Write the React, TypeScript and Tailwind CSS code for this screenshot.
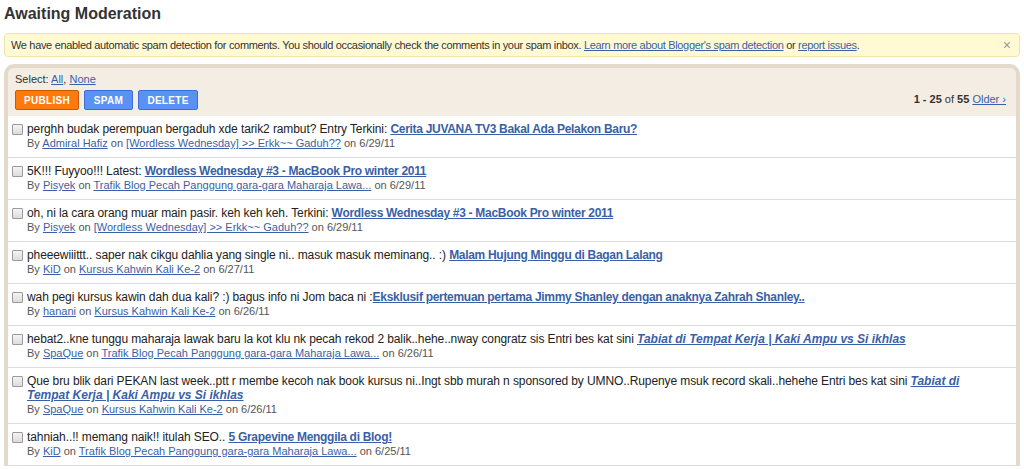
const rows = [
  {
    text: "perghh budak perempuan bergaduh xde tarik2 rambut? Entry Terkini: ",
    link: "Cerita JUVANA TV3 Bakal Ada Pelakon Baru?",
    author: "Admiral Hafiz",
    post: "[Wordless Wednesday] >> Erkk~~ Gaduh??",
    date: "6/29/11",
  },
  {
    text: "5K!!! Fuyyoo!!! Latest: ",
    link: "Wordless Wednesday #3 - MacBook Pro winter 2011",
    author: "Pisyek",
    post: "Trafik Blog Pecah Panggung gara-gara Maharaja Lawa...",
    date: "6/29/11",
  },
  {
    text: "oh, ni la cara orang muar main pasir. keh keh keh. Terkini: ",
    link: "Wordless Wednesday #3 - MacBook Pro winter 2011",
    author: "Pisyek",
    post: "[Wordless Wednesday] >> Erkk~~ Gaduh??",
    date: "6/29/11",
  },
  {
    text: "pheeewiiittt.. saper nak cikgu dahlia yang single ni.. masuk masuk meminang.. :) ",
    link: "Malam Hujung Minggu di Bagan Lalang",
    author: "KiD",
    post: "Kursus Kahwin Kali Ke-2",
    date: "6/27/11",
  },
  {
    text: "wah pegi kursus kawin dah dua kali? :) bagus info ni Jom baca ni :",
    link: "Eksklusif pertemuan pertama Jimmy Shanley dengan anaknya Zahrah Shanley..",
    author: "hanani",
    post: "Kursus Kahwin Kali Ke-2",
    date: "6/26/11",
  },
  {
    text: "hebat2..kne tunggu maharaja lawak baru la kot klu nk pecah rekod 2 balik..hehe..nway congratz sis Entri bes kat sini ",
    link: "Tabiat di Tempat Kerja | Kaki Ampu vs Si ikhlas",
    italic: true,
    author: "SpaQue",
    post: "Trafik Blog Pecah Panggung gara-gara Maharaja Lawa...",
    date: "6/26/11",
  },
  {
    text: "Que bru blik dari PEKAN last week..ptt r membe kecoh nak book kursus ni..Ingt sbb murah n sponsored by UMNO..Rupenye msuk record skali..hehehe Entri bes kat sini ",
    link: "Tabiat di Tempat Kerja | Kaki Ampu vs Si ikhlas",
    italic: true,
    author: "SpaQue",
    post: "Kursus Kahwin Kali Ke-2",
    date: "6/26/11",
  },
  {
    text: "tahniah..!! memang naik!! itulah SEO.. ",
    link: "5 Grapevine Menggila di Blog!",
    author: "KiD",
    post: "Trafik Blog Pecah Panggung gara-gara Maharaja Lawa...",
    date: "6/25/11",
  },
];

function Checkbox() {
  return (
    <span className="mt-[2px] inline-block h-[11px] w-[11px] shrink-0 rounded-[1px] border border-[#9a9a9a] bg-gradient-to-b from-[#f4f4f4] to-[#dcdcdc]" />
  );
}

export default function App() {
  return (
    <div className="min-h-screen bg-white px-[4px] pt-[4px] font-['Liberation_Sans',Arial,sans-serif] text-[#222]">
      <h1 className="text-[16px] font-bold leading-[20px] text-[#333]">
        Awaiting Moderation
      </h1>

      <div className="mt-[9px] flex h-[24px] items-center justify-between rounded-[4px] border border-[#efe3a8] bg-[#fffad4] pl-[6px] pr-[8px] text-[11px] text-[#333]">
        <p className="tracking-[-0.33px]">
          We have enabled automatic spam detection for comments. You should
          occasionally check the comments in your spam inbox.{" "}
          <a href="#" className="text-[#3a5fa8] underline">
            Learn more about Blogger's spam detection
          </a>{" "}
          or{" "}
          <a href="#" className="text-[#3a5fa8] underline">
            report issues
          </a>
          .
        </p>
        <span className="text-[14px] leading-none text-[#999]">×</span>
      </div>

      <div className="mt-[7px] rounded-t-[10px] border-x-[4px] border-t-[4px] border-[#e4dacc] bg-[#f4ede4]">
        <div className="flex items-end justify-between px-[7px] pb-[6px] pt-[4px]">
          <div>
            <p className="text-[11px] leading-[14px] text-[#333]">
              Select:{" "}
              <a href="#" className="text-[#3a5fa8] underline">
                All
              </a>
              ,{" "}
              <a href="#" className="text-[#3a5fa8] underline">
                None
              </a>
            </p>
            <div className="mt-[4px] flex gap-[5px]">
              <button
                type="button"
                className="h-[20px] w-[64px] rounded-[2px] border border-[#c85a00] bg-[#ff7a0c] text-[10px] font-bold tracking-[0.3px] text-white"
              >
                PUBLISH
              </button>
              <button
                type="button"
                className="h-[20px] w-[49px] rounded-[2px] border border-[#3a6fd8] bg-[#5a92f4] text-[10px] font-bold tracking-[0.3px] text-white"
              >
                SPAM
              </button>
              <button
                type="button"
                className="h-[20px] w-[60px] rounded-[2px] border border-[#3a6fd8] bg-[#5a92f4] text-[10px] font-bold tracking-[0.3px] text-white"
              >
                DELETE
              </button>
            </div>
          </div>
          <p className="pb-[3px] pr-[3px] text-[11px] text-[#333]">
            <span className="font-bold">1 - 25</span> of{" "}
            <span className="font-bold">55</span>{" "}
            <a href="#" className="text-[#3a5fa8] underline">
              Older ›
            </a>
          </p>
        </div>

        <ul className="bg-white">
          {rows.map((r, i) => (
            <li
              key={i}
              className="flex gap-[4px] border-b border-[#dcdcdc] pb-[7px] pl-[4px] pr-[12px] pt-[6px]"
            >
              <Checkbox />
              <div className="min-w-0">
                <p className="text-[12px] leading-[14px] tracking-[-0.1px] text-[#222]">
                  {r.text}
                  <a
                    href="#"
                    className={
                      r.italic
                        ? "font-bold italic tracking-normal text-[#3a5fa8] underline"
                        : "font-bold tracking-[-0.3px] text-[#3a5fa8] underline"
                    }
                  >
                    {r.link}
                  </a>
                </p>
                <p className="text-[11px] leading-[14px] text-[#555]">
                  By{" "}
                  <a href="#" className="text-[#3a5fa8] underline">
                    {r.author}
                  </a>{" "}
                  on{" "}
                  <a href="#" className="text-[#3a5fa8] underline">
                    {r.post}
                  </a>{" "}
                  on {r.date}
                </p>
              </div>
            </li>
          ))}
        </ul>
      </div>
    </div>
  );
}
